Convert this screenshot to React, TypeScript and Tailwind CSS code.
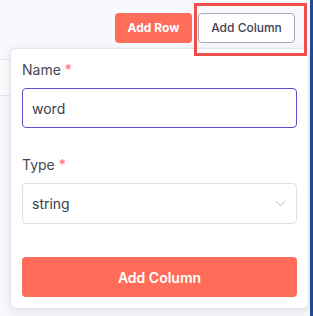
export default function App() {
  return (
    <div
      className="relative flex w-[313px] h-[316px] overflow-hidden bg-[#f8f9fc]"
      style={{ fontFamily: 'Inter, "Noto Sans", sans-serif' }}
    >
      <div className="flex-1 flex flex-col">
        {/* Toolbar */}
        <div className="flex justify-end gap-[6px] pt-[13px] pr-[15px]">
          <button className="h-[30px] w-[77px] rounded-[4px] bg-[#ff6d5a] text-[12px] font-bold text-white">
            Add Row
          </button>
          <button className="h-[30px] w-[97px] rounded-[4px] border border-[#a5a8bb] bg-white text-[12px] font-medium text-[#3f4254]">
            Add Column
          </button>
        </div>
        {/* table lines behind the popover */}
        <div className="mt-[16px] h-[37px] border-t border-b border-[#e3e5ec] bg-[#f9fafc]" />
      </div>
      <div className="w-[3px] bg-[#1d4a9a]" />

      {/* Popover */}
      <div className="absolute left-[10px] top-[48px] w-[299px] rounded-[6px] border border-[#e3e5ec] bg-white px-[11px] pt-[11px] pb-[11px] shadow-[0_2px_8px_rgba(30,40,70,0.12)]">
        <label className="block h-[20px] text-[14px] leading-[20px] text-[#454754]">
          Name <span className="text-[#ff6d5a]">*</span>
        </label>
        <div className="mt-[8px] flex h-[40px] items-center rounded-[4px] border border-[#5b4fcb] px-[9px] text-[14px] text-[#3b3d48]">
          word
        </div>
        <label className="mt-[27px] block h-[20px] text-[14px] leading-[20px] text-[#454754]">
          Type <span className="text-[#ff6d5a]">*</span>
        </label>
        <div className="mt-[8px] flex h-[41px] items-center justify-between rounded-[4px] border border-[#dde0e8] px-[9px] text-[14px] text-[#3b3d48]">
          <span>string</span>
          <svg width="11" height="7" viewBox="0 0 11 7" className="mr-[1px]">
            <path d="M0.5 0.8 L5.5 5.8 L10.5 0.8" fill="none" stroke="#b4b7c3" strokeWidth="1" />
          </svg>
        </div>
        <button className="mt-[33px] h-[40px] w-full rounded-[4px] bg-[#ff6d5a] text-[14px] font-semibold text-white">
          Add Column
        </button>
      </div>

      {/* highlight box, drawn over the popover */}
      <div className="absolute left-[194px] top-[3px] w-[113px] h-[53px] border-[3px] border-[#f04d4d]" />
    </div>
  )
}
